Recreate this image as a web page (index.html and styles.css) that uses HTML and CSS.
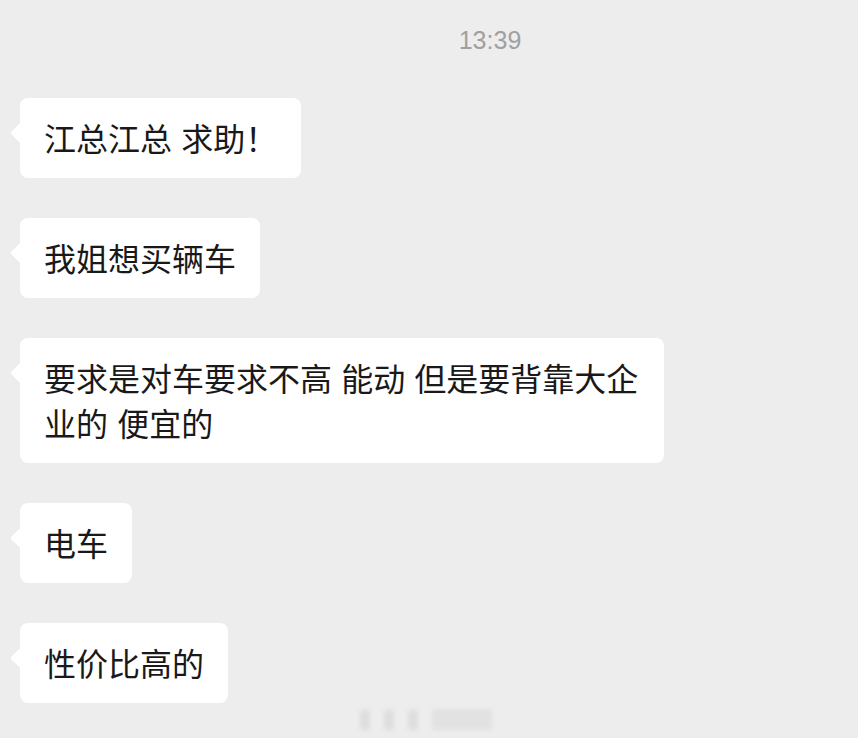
FILE: index.html
```html
<!DOCTYPE html>
<html lang="zh-CN">
<head>
  <meta charset="UTF-8" />
  <meta name="viewport" content="width=device-width, initial-scale=1" />
  <title>聊天记录</title>
  <link rel="stylesheet" href="styles.css">
</head>
<body>
  <div class="chat">
    <div class="time">13:39</div>

    <div class="messages">
      <div class="bubble">江总江总 求助！</div>
      <div class="bubble">我姐想买辆车</div>
      <div class="bubble">要求是对车要求不高 能动 但是要背靠大企业的 便宜的</div>
      <div class="bubble">电车</div>
      <div class="bubble">性价比高的</div>
    </div>
  </div>

  <div class="watermark">
    <span></span><span></span><span></span><span class="wide"></span>
  </div>
</body>
</html>
```

FILE: styles.css
```css
*, *::before, *::after { margin: 0; padding: 0; box-sizing: border-box; }

body {
  background: #ededed;
  font-family: "Noto Sans CJK SC", "Noto Sans", sans-serif;
  color: #191919;
  height: 100vh;
  overflow: hidden;
  position: relative;
}

.chat {
  padding: 26px 0 0 20px;
}

.time {
  padding-left: 102px;
  text-align: center;
  font-family: "Liberation Sans", Arial, sans-serif;
  font-size: 25px;
  line-height: 28px;
  color: #a0a0a0;
}

.messages {
  margin-top: 44px;
  display: flex;
  flex-direction: column;
  align-items: flex-start;
  gap: 40px;
}

.bubble {
  position: relative;
  background: #fff;
  border-radius: 8px;
  padding: 17px 24px 18px;
  max-width: 644px;
  font-size: 32px;
  line-height: 45px;
  word-spacing: 2px;
}

/* little tail on the left */
.bubble::before {
  content: "";
  position: absolute;
  left: -7px;
  top: 28px;
  width: 14px;
  height: 14px;
  background: #fff;
  border-radius: 2px;
  transform: rotate(45deg);
}

.watermark {
  position: absolute;
  left: 360px;
  bottom: 8px;
  display: flex;
  gap: 14px;
  filter: blur(2px);
  opacity: 0.6;
}

.watermark span {
  width: 10px;
  height: 20px;
  background: #d4d4d4;
}

.watermark .wide {
  width: 60px;
  background: repeating-linear-gradient(#d0d0d0 0 3px, #e6e6e6 3px 6px);
}
```
